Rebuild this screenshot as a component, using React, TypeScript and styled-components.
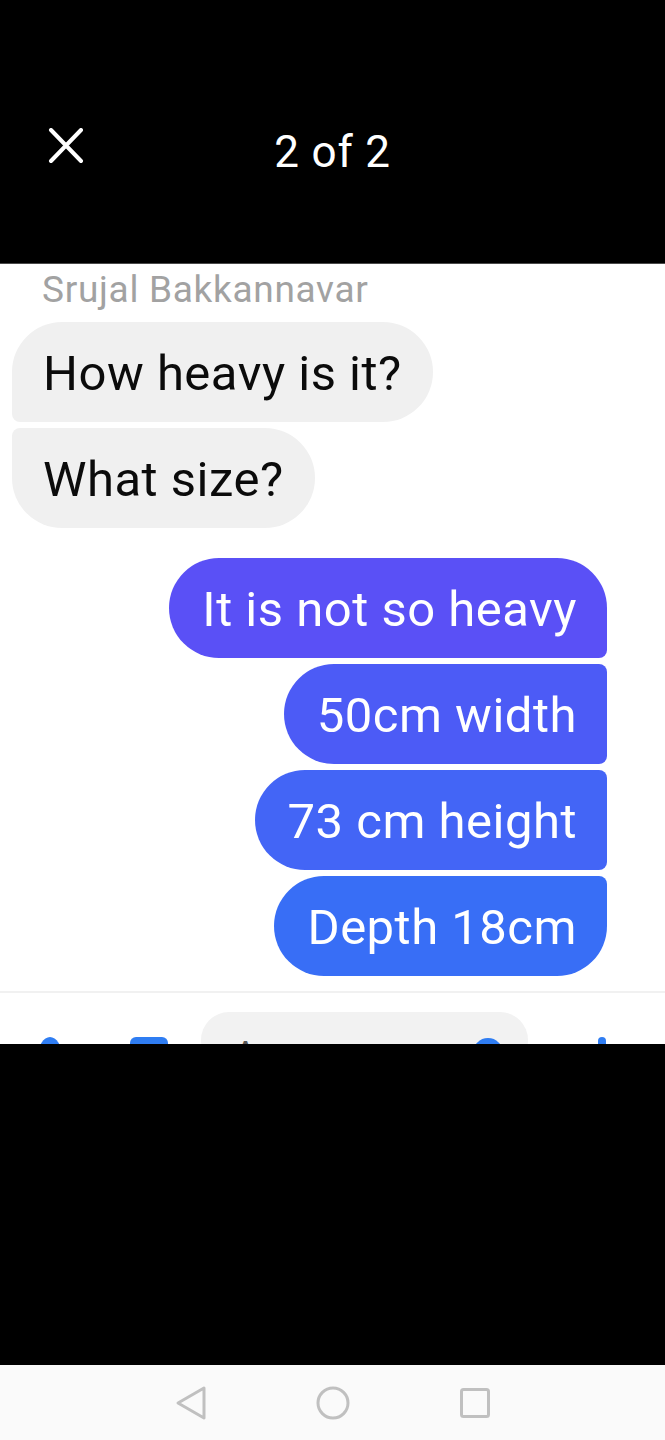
import React from "react";
import styled, { createGlobalStyle } from "styled-components";

const GlobalStyle = createGlobalStyle`
  html, body {
    margin: 0;
    padding: 0;
    background: #000;
  }
  body {
    font-family: Roboto, "Noto Sans", "Liberation Sans", sans-serif;
  }
`;

type Side = "in" | "out";
type Pos = "first" | "middle" | "last";

const Screen = styled.div`
  width: 665px;
  height: 1440px;
  display: flex;
  flex-direction: column;
  background: #000;
`;

const Header = styled.header`
  height: 264px;
  border-bottom: 1px solid #4a4a4a;
  display: grid;
  grid-template-columns: 120px 1fr 120px;
  align-items: start;
  padding-top: 124px;
  box-sizing: border-box;
`;

const CloseButton = styled.button`
  width: 44px;
  height: 44px;
  margin-left: 44px;
  padding: 0;
  border: none;
  background: transparent;
  display: flex;
  align-items: center;
  justify-content: center;
`;

const Counter = styled.h1`
  margin: 2px 0 0;
  color: #fff;
  font-weight: 400;
  font-size: 44px;
  letter-spacing: 0.8px;
  line-height: 52px;
  text-align: center;
`;

const Shot = styled.section`
  height: 780px;
  background: #fff;
  overflow: hidden;
  display: flex;
  flex-direction: column;
`;

const Thread = styled.div`
  display: flex;
  flex-direction: column;
  padding: 6px 58px 0 12px;
`;

const Sender = styled.div`
  color: #a2a2a2;
  font-size: 37px;
  letter-spacing: 0.7px;
  line-height: 40px;
  padding-left: 30px;
  margin-bottom: 12px;
`;

const Group = styled.div<{ $side: Side }>`
  display: flex;
  flex-direction: column;
  align-items: ${(p) => (p.$side === "in" ? "flex-start" : "flex-end")};
  gap: 6px;
  & + & {
    margin-top: 30px;
  }
`;

const BIG = 50;
const SMALL = 8;

const radius = (side: Side, pos: Pos) => {
  const top = pos === "first" ? BIG : SMALL;
  const bottom = pos === "last" ? BIG : SMALL;
  // tl tr br bl
  if (side === "in") return `${top}px ${BIG}px ${BIG}px ${bottom}px`;
  return `${BIG}px ${top}px ${bottom}px ${BIG}px`;
};

const Bubble = styled.div<{ $side: Side; $pos: Pos; $bg: string }>`
  height: 100px;
  box-sizing: border-box;
  padding: 3px ${(p) => (p.$side === "in" ? "31px" : "30px")} 0
    ${(p) => (p.$side === "in" ? "31px" : "33px")};
  line-height: 97px;
  font-size: 49px;
  letter-spacing: 0.5px;
  white-space: nowrap;
  background: ${(p) => p.$bg};
  color: ${(p) => (p.$side === "in" ? "#0b0b0b" : "#ffffff")};
  border-radius: ${(p) => radius(p.$side, p.$pos)};
`;

const Composer = styled.div`
  margin-top: 15px;
  border-top: 2px solid #f1f1f1;
  display: flex;
  align-items: flex-start;
  padding: 19px 0 0 38px;
`;

const Tool = styled.div<{ $w: number; $ml: number; $round?: boolean }>`
  width: ${(p) => p.$w}px;
  height: 40px;
  margin-left: ${(p) => p.$ml}px;
  margin-top: 25px;
  background: #2f7df2;
  border-radius: ${(p) => (p.$round ? "50%" : "6px")};
`;

const Field = styled.div`
  width: 327px;
  height: 56px;
  margin-left: 33px;
  border-radius: 28px;
  background: #f2f2f2;
  display: flex;
  align-items: flex-start;
  padding: 22px 25px 0 32px;
  box-sizing: border-box;
  justify-content: space-between;
  color: #555;
  font-size: 38px;
`;

const Emoji = styled.div`
  width: 30px;
  height: 30px;
  border-radius: 50%;
  background: #2f7df2;
  margin-top: 4px;
`;

const Void = styled.div`
  flex: 1;
  background: #000;
`;

const NavBar = styled.nav`
  height: 75px;
  background: #fafafa;
  display: flex;
  align-items: center;
  justify-content: center;
  gap: 106px;
`;

const NavIcon = styled.svg`
  width: 36px;
  height: 36px;
  fill: none;
  stroke: #c0c0c0;
  stroke-width: 3;
  stroke-linejoin: round;
  stroke-linecap: round;
`;

const incoming = ["How heavy is it?", "What size?"];
const outgoing = [
  { text: "It is not so heavy", bg: "#5a50f6" },
  { text: "50cm width", bg: "#4c5bf6" },
  { text: "73 cm height", bg: "#4365f6" },
  { text: "Depth 18cm", bg: "#386ef6" },
];

const posOf = (i: number, n: number): Pos =>
  i === 0 ? "first" : i === n - 1 ? "last" : "middle";

export default function App() {
  return (
    <Screen>
      <GlobalStyle />
      <Header>
        <CloseButton aria-label="Close">
          <svg width="36" height="36" viewBox="0 0 36 36">
            <path
              d="M3 2 L33 33 M33 2 L3 33"
              stroke="#fff"
              strokeWidth="4"
              strokeLinecap="round"
            />
          </svg>
        </CloseButton>
        <Counter>2 of 2</Counter>
      </Header>

      <Shot>
        <Thread>
          <Sender>Srujal Bakkannavar</Sender>
          <Group $side="in">
            {incoming.map((t, i) => (
              <Bubble
                key={t}
                $side="in"
                $pos={posOf(i, incoming.length)}
                $bg="#f0f0f0"
              >
                {t}
              </Bubble>
            ))}
          </Group>
          <Group $side="out">
            {outgoing.map((m, i) => (
              <Bubble
                key={m.text}
                $side="out"
                $pos={posOf(i, outgoing.length)}
                $bg={m.bg}
              >
                {m.text}
              </Bubble>
            ))}
          </Group>
        </Thread>
        <Composer>
          <Tool $w={24} $ml={0} $round />
          <Tool $w={38} $ml={68} />
          <Field>
            <span>Aa</span>
            <Emoji />
          </Field>
          <Tool $w={8} $ml={70} />
        </Composer>
      </Shot>

      <Void />

      <NavBar>
        <NavIcon viewBox="0 0 36 36">
          <path d="M31 3 L5 18 L31 33 Z" />
        </NavIcon>
        <NavIcon viewBox="0 0 36 36">
          <circle cx="18" cy="18" r="15" />
        </NavIcon>
        <NavIcon viewBox="0 0 36 36">
          <rect x="4.5" y="4.5" width="27" height="27" rx="2" />
        </NavIcon>
      </NavBar>
    </Screen>
  );
}
